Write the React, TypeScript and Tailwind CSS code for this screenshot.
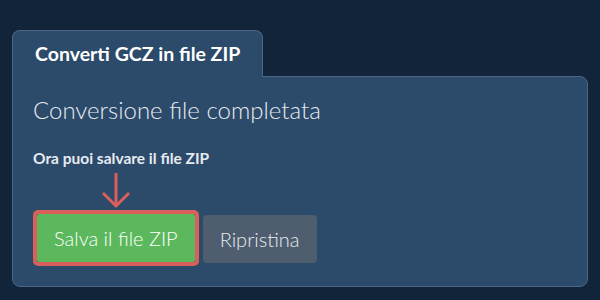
export default function App() {
  return (
    <div className="w-[600px] h-[300px] bg-[#12243a] pt-[30px] pl-[12px] font-['Lato',sans-serif]">
      <div className="w-[576px] flex flex-col">
        {/* Tab */}
        <div className="relative z-10 -mb-px w-[251px] h-[47px] bg-[#2c4a6a] border border-b-0 border-[#4b6788] rounded-t-lg pl-[22px] pt-[11px]">
          <span className="block text-[19.5px] leading-[24px] font-bold text-white">{"Conver\u200Cti GCZ in file ZIP"}</span>
        </div>

        {/* Panel */}
        <div className="bg-[#2c4a6a] border border-[#4b6788] rounded-tr-lg rounded-b-lg px-5 pt-[18px] pb-5">
          <h2 className="text-[24px] leading-[29px] font-light text-[#e6ebf1]">Conversione file completata</h2>
          <p className="mt-[24px] text-[15.5px] leading-[20px] font-bold text-[#e6ebf1]">Ora puoi salvare il file ZIP</p>

          <div className="flex items-start gap-[4px]">
            <div className="flex flex-col items-center">
              <svg width="30" height="42" viewBox="0 0 30 42" fill="none">
                <path d="M15 5 V38" stroke="#d9605a" strokeWidth="3" />
                <path d="M2 25 L15 38 L28 25" stroke="#d9605a" strokeWidth="3" />
              </svg>
              <div className="border-4 border-[#d9605a] rounded-[5px]">
                <button className="h-12 px-[17px] bg-[#5cb85c] rounded-[2px] text-[20px] font-light text-white whitespace-nowrap">Salva il file ZIP</button>
              </div>
            </div>
            <button className="mt-[47px] h-12 px-[17px] bg-[#4e5e6e] rounded-[4px] text-[20px] font-light text-[#e6ebf1] whitespace-nowrap">{"Ripris\u200Cti\u200Cna"}</button>
          </div>
        </div>
      </div>
    </div>
  );
}
